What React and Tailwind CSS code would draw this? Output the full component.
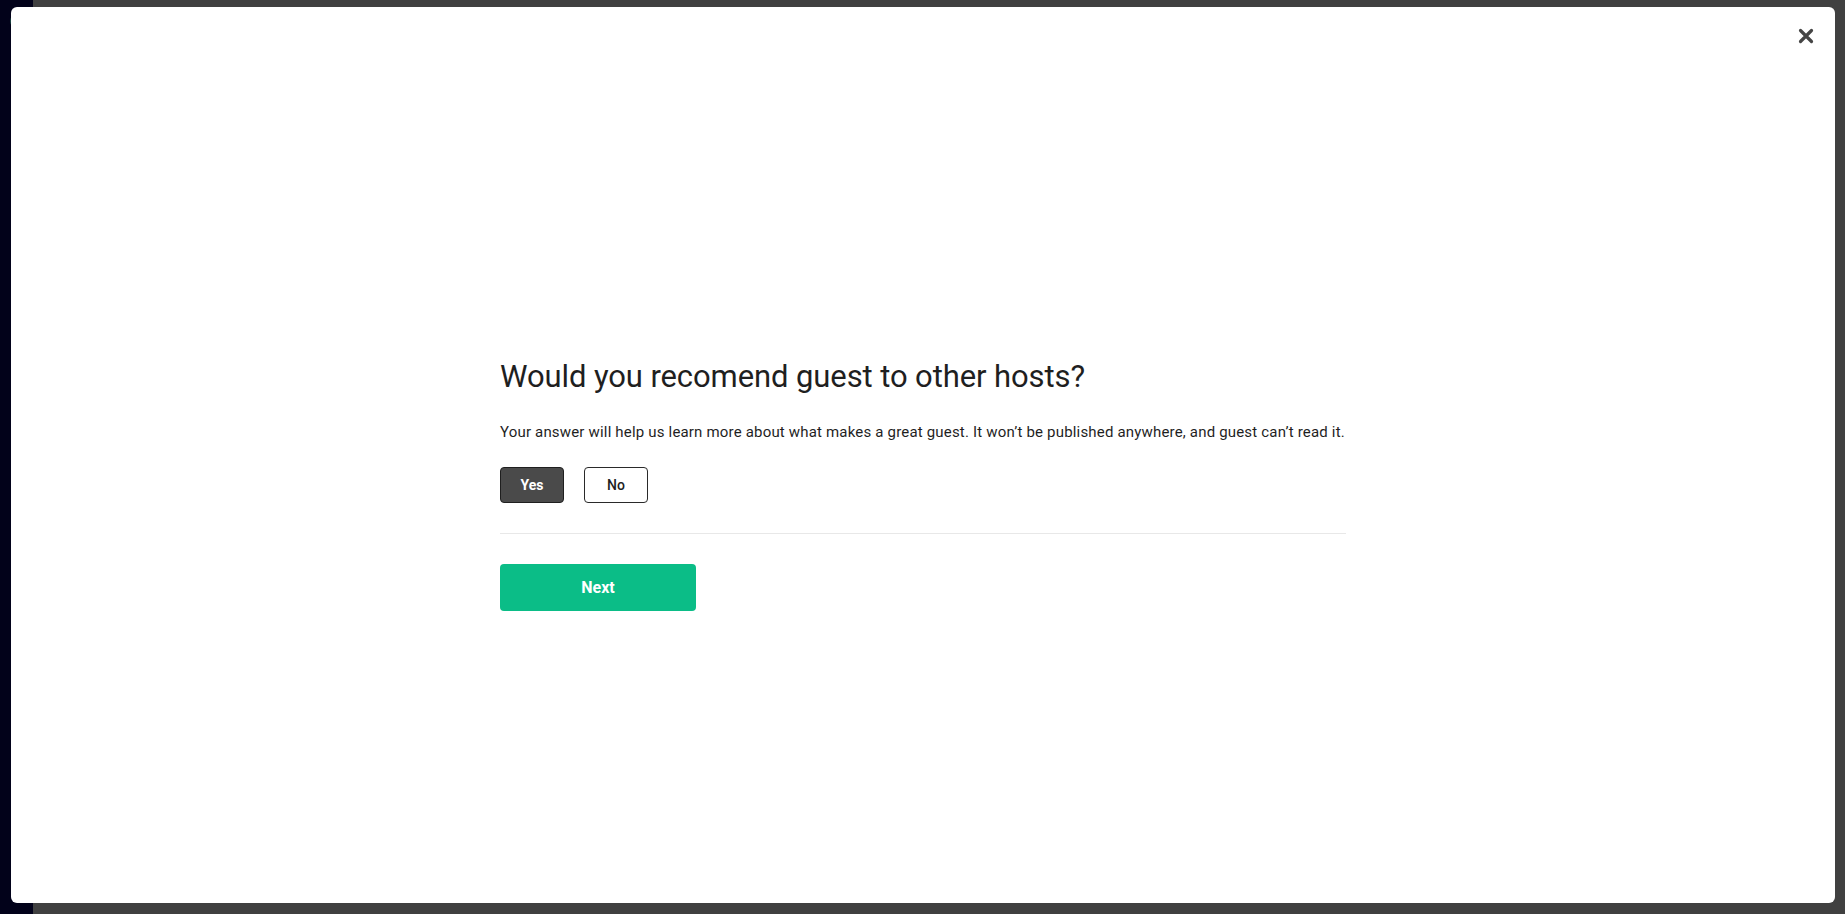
import React from "react";

export default function App() {
  return (
    <div
      className="relative w-[1845px] h-[914px] overflow-hidden bg-[#404040]"
      style={{ fontFamily: "Roboto, 'Liberation Sans', sans-serif" }}
    >
      {/* background app: left dark sidebar */}
      <div className="absolute left-0 top-0 h-full w-[33px] bg-[#02021a] flex flex-col items-center gap-[38px] pt-[14px]">
        <div className="w-[14px] h-[14px] rounded-full border-2 border-[#1d4a44]" />
        <div className="w-[12px] h-[12px] rounded-sm border border-[#2a2a3c]" />
        <div className="w-[12px] h-[12px] rounded-sm border border-[#2a2a3c]" />
        <div className="w-[12px] h-[12px] rounded-sm border border-[#2a2a3c]" />
        <div className="w-[12px] h-[12px] rounded-sm border border-[#2a2a3c]" />
        <div className="w-[12px] h-[12px] rounded-sm border border-[#2a2a3c]" />
        <div className="w-[12px] h-[12px] bg-[#3a3a48]" />
        <div className="w-[12px] h-[12px] rounded-sm border border-[#2a2a3c]" />
        <div className="w-[12px] h-[12px] rounded-full border border-[#2a2a3c]" />
      </div>

      {/* modal */}
      <div className="absolute left-[11px] top-[7px] w-[1824px] h-[896px] bg-white rounded-[6px]">
        <button className="absolute right-[21px] top-[21px] w-[16px] h-[16px] flex items-center justify-center">
          <svg width="16" height="16" viewBox="0 0 16 16">
            <path d="M2.5 2.5 L13.5 13.5 M13.5 2.5 L2.5 13.5" stroke="#454545" strokeWidth="3.2" strokeLinecap="round" />
          </svg>
        </button>

        <div className="w-[846px] mx-auto pt-[351px] flex flex-col">
          <h1 className="text-[31px] leading-[38px] font-normal text-[#1f1f1f] tracking-[-0.1px]">
            Would you recomend guest to other hosts?
          </h1>
          <p className="mt-[26px] text-[15px] leading-[20px] text-[#1f1f1f] tracking-[0.18px]">
            Your answer will help us learn more about what makes a great guest. It won’t be published anywhere, and guest can’t read it.
          </p>
          <div className="mt-[25px] flex gap-[20px]">
            <button className="w-[64px] h-[36px] rounded-[4px] bg-[#4a4a4a] border border-[#1f1f1f] text-white text-[14px] font-bold">
              Yes
            </button>
            <button className="w-[64px] h-[36px] rounded-[4px] bg-white border border-[#2a2a2a] text-[#1f1f1f] text-[14px] font-medium">
              No
            </button>
          </div>
          <div className="mt-[30px] h-px bg-[#e8e8e8]" />
          <button className="mt-[30px] w-[196px] h-[47px] rounded-[4px] bg-[#0bbd87] text-white text-[16px] font-bold">
            Next
          </button>
        </div>
      </div>
    </div>
  );
}
